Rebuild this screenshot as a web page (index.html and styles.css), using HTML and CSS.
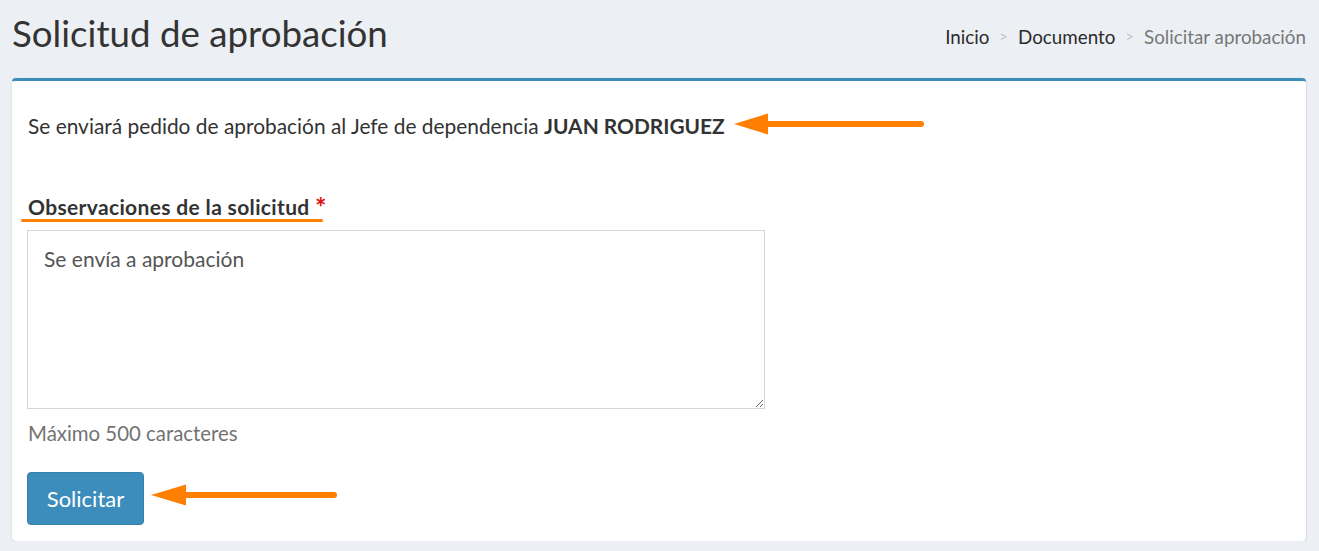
FILE: index.html
```html
<!DOCTYPE html>
<html lang="es">
<head>
<meta charset="utf-8">
<title>Solicitud de aprobación</title>
<link rel="stylesheet" href="styles.css">
</head>
<body>
<header class="content-header">
  <h1 class="page-title">Solicitud de aprobación</h1>
  <ol class="breadcrumb">
    <li class="crumb">Inicio</li>
    <li class="sep">&gt;</li>
    <li class="crumb">Documento</li>
    <li class="sep">&gt;</li>
    <li class="crumb active">Solicitar aprobación</li>
  </ol>
</header>
<main class="card">
  <p class="notice">Se enviará pedido de aprobación al Jefe de dependencia <strong>JUAN RODRIGUEZ</strong></p>
  <div class="form-group">
    <label class="field-label" for="obs">Observaciones de la solicitud <span class="req">*</span></label>
    <textarea id="obs" class="field">Se envía a aprobación</textarea>
    <div class="help">Máximo 500 caracteres</div>
  </div>
  <div class="actions">
    <button class="btn" type="button">Solicitar</button>
  </div>
  <svg class="arrow arrow-top" width="200" height="30" viewBox="0 0 200 30">
    <polygon points="0,15 34,4.5 34,25.5" fill="#ff7f00"/>
    <line x1="30" y1="15" x2="187" y2="15" stroke="#ff7f00" stroke-width="6" stroke-linecap="round"/>
  </svg>
  <svg class="arrow arrow-btn" width="200" height="30" viewBox="0 0 200 30">
    <polygon points="0,15 35,4.5 35,25.5" fill="#ff7f00"/>
    <line x1="30" y1="15" x2="183" y2="15" stroke="#ff7f00" stroke-width="6" stroke-linecap="round"/>
  </svg>
</main>
</body>
</html>
```
FILE: styles.css
```css
html, body {
  margin: 0;
  padding: 0;
}
body {
  background: #ecf0f5;
  font-family: "Lato", "Noto Sans", sans-serif;
  color: #333;
}
.content-header {
  display: flex;
  justify-content: space-between;
  align-items: flex-start;
  padding: 10px 13px 0 12px;
}
.page-title {
  margin: 0;
  font-weight: 400;
  font-size: 36.7px;
  line-height: 46px;
  color: #333;
}
.breadcrumb {
  display: flex;
  list-style: none;
  margin: 15px 0 0 0;
  padding: 0;
  font-size: 18.8px;
  line-height: 23px;
  gap: 10px;
}
.crumb { color: #2b2b2b; }
.crumb.active { color: #777; }
.sep { color: #c4c4c4; font-size: 15px; }
.card {
  position: relative;
  margin: 22px 13px 0 12px;
  background: #fff;
  border-top: 3px solid #3c8dbc;
  border-radius: 4px;
  box-shadow: 0 1px 2px rgba(0,0,0,0.14), 1px 0 1px rgba(0,0,0,0.04);
  padding: 32px 16px 16px 16px;
}
.notice {
  margin: 0;
  font-size: 20.9px;
  line-height: 25px;
  color: #333;
}
.notice strong { font-weight: 700; }
.form-group { margin-top: 56px; }
.field-label {
  position: relative;
  display: block;
  font-size: 21px;
  font-weight: 700;
  line-height: 25px;
  letter-spacing: 0.35px;
  color: #333;
}
.field-label::after {
  content: "";
  position: absolute;
  left: -7px;
  top: 25px;
  width: 302px;
  height: 3px;
  border-radius: 2px;
  background: #ff7f00;
}
.req {
  color: #dd1111;
  font-size: 27px;
  line-height: 0;
  vertical-align: -2px;
}
.field {
  display: block;
  box-sizing: border-box;
  width: 738px;
  height: 179px;
  margin: 11px 0 0 -1px;
  padding: 15px 16px;
  font-family: inherit;
  font-size: 21px;
  line-height: 25px;
  color: #555;
  border: 1px solid #d2d6de;
  border-radius: 0;
  resize: vertical;
}
.help {
  margin-top: 12px;
  color: #737373;
  font-size: 20.4px;
  line-height: 24px;
}
.actions {
  display: flex;
  align-items: center;
  margin-top: 27px;
}
.btn {
  margin-left: -1px;
  width: 117px;
  height: 53px;
  padding: 0;
  background: #3c8dbc;
  border: 1px solid #367fa9;
  border-radius: 4px;
  color: #fff;
  font-family: inherit;
  font-size: 22px;
}
.arrow { position: absolute; }
.arrow-top { left: 722px; top: 28px; }
.arrow-btn { left: 139px; top: 399px; }
```
